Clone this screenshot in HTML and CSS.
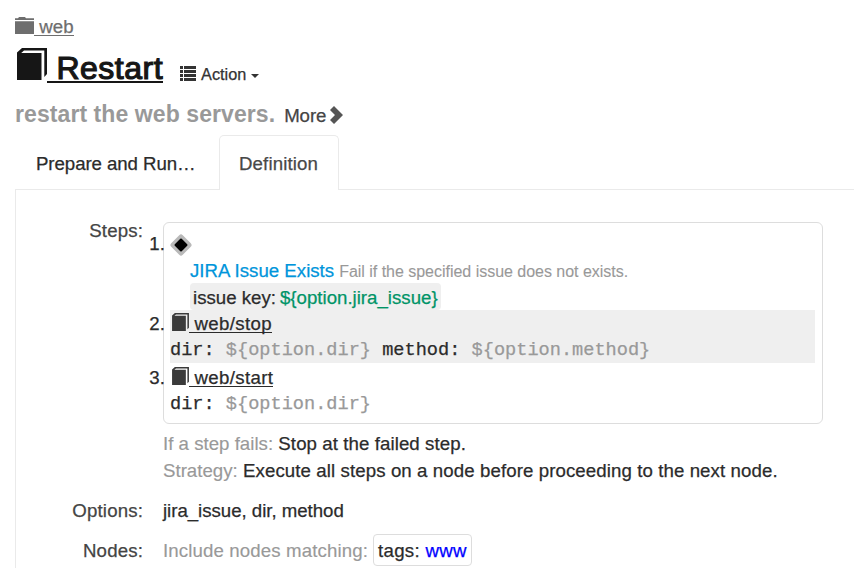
FILE: index.html
```
<!DOCTYPE html>
<html lang="en">
<head>
<meta charset="utf-8">
<title>Restart</title>
<link rel="stylesheet" href="styles.css">
</head>
<body>
<svg class="defs" width="0" height="0">
  <symbol id="book" viewBox="0 0 30 32">
    <path fill="currentColor" d="M0 4.5 5 0H30V26L27.3 29V2.6H7L4.2 5H24.5V32H0Z"/>
  </symbol>
</svg>
<header>
  <a class="group" href="#"><svg class="folder" width="19" height="17" viewBox="0 0 19 17"><path fill="currentColor" d="M0 1.2H3L4 0H10L11 1.2H19V3H0ZM0 4.2H19V17H0Z"/></svg><span class="u">&nbsp;web</span></a>
  <div class="title">
    <a class="job" href="#"><svg class="book-lg"><use href="#book"/></svg><span class="u">&nbsp;Restart</span></a>
    <span class="action"><svg width="16" height="15" viewBox="0 0 16 15"><path fill="currentColor" d="M0 0H3V3H0ZM0 4H3V7H0ZM0 8H3V11H0ZM0 12H3V15H0ZM4 0H16V3H4ZM4 4H16V7H4ZM4 8H16V11H4ZM4 12H16V15H4Z"/></svg><span class="action-text">Action</span><i class="caret"></i></span>
  </div>
  <div class="about"><strong>restart the web servers.</strong><span class="more">More</span><svg class="chev" width="13" height="18" viewBox="0 0 13 18"><path fill="currentColor" d="M4 0 13 9 4 18 0 14 5 9 0 4Z"/></svg></div>
</header>
<nav class="tabs"><a class="tab run">Prepare and Run…</a><a class="tab active">Definition</a></nav>
<main>
  <div class="row steps-row">
    <div class="label">Steps:</div>
    <div class="content">
      <div class="steps">
        <div class="step first">
          <div class="line"><span class="num">1.</span><svg class="diamond" width="22" height="22" viewBox="0 0 22 22"><path d="M11 3 19 11 11 19 3 11Z" fill="#b9b9b9" stroke="#b9b9b9" stroke-width="5" stroke-linejoin="round"/><path d="M11 5.5 16.5 11 11 16.5 5.5 11Z" stroke="#000" stroke-width="2" stroke-linejoin="round"/></svg></div>
          <div class="line indent"><span class="plugin">JIRA Issue Exists</span><span class="desc">Fail if the specified issue does not exists.</span></div>
          <div class="config"><span class="key">issue key:</span><span class="value">${option.jira_issue}</span></div>
        </div>
        <div class="step shaded">
          <div class="line"><span class="num">2.</span><svg class="book-sm"><use href="#book"/></svg><a class="u">&nbsp;web/stop</a></div>
          <div class="args">dir: <i>${option.dir}</i> method: <i>${option.method}</i></div>
        </div>
        <div class="step">
          <div class="line"><span class="num">3.</span><svg class="book-sm"><use href="#book"/></svg><a class="u">&nbsp;web/start</a></div>
          <div class="args">dir: <i>${option.dir}</i></div>
        </div>
      </div>
      <div class="line fails"><span class="muted">If a step fails:</span> Stop at the failed step.</div>
      <div class="line strategy"><span class="muted">Strategy:</span> Execute all steps on a node before proceeding to the next node.</div>
    </div>
  </div>
  <div class="row"><div class="label">Options:</div><div class="content options">jira_issue, dir, method</div></div>
  <div class="row"><div class="label">Nodes:</div><div class="content nodes"><span class="muted">Include nodes matching:</span><span class="tag">tags: <b>www</b></span></div></div>
</main>
</body>
</html>
```

FILE: styles.css
```
* { box-sizing: border-box; }
body {
  margin: 0;
  height: 568px;
  overflow: hidden;
  background: #fff;
  color: #2b2b2b;
  font: 18.67px/27px "Liberation Sans", Arial, sans-serif;
  letter-spacing: 0.05px;
  white-space: nowrap;
  -webkit-text-stroke: 0.25px currentColor;
}
svg { display: block; flex: none; }
.defs { position: absolute; }
a { color: inherit; text-decoration: none; }
.u { border-bottom: 1px solid currentColor; }
header { height: 135px; padding: 13px 0 0 15px; }
.group { display: flex; height: 27px; color: #6e6e6e; }
.group .u { height: 23px; }
.folder { margin-top: 4px; }
.title { display: flex; height: 57px; }
.job { display: flex; margin-left: 2px; color: #161616; }
.book-lg { width: 30px; height: 32px; margin-top: 8px; }
.job .u {
  height: 43px;
  border-width: 2px;
  font-size: 32px;
  line-height: 56px;
  letter-spacing: 0.5px;
  -webkit-text-stroke: 1.2px currentColor;
}
.action { display: flex; margin-left: 17px; color: #333; }
.action svg { margin-top: 26px; }
.action-text { margin: 21px 0 0 5px; font-size: 16.3px; letter-spacing: 0; }
.caret { margin: 34px 0 0 5px; height: 4px; border: 4px solid transparent; border-top-color: #333; border-bottom: 0; }
.about { display: flex; height: 38px; line-height: 34px; }
.about strong { color: #999; font-size: 23px; letter-spacing: 0.08px; -webkit-text-stroke: 0; }
.more { margin-left: 9px; padding-top: 2px; color: #444; letter-spacing: -0.1px; }
.chev { margin: 9px 0 0 4px; color: #555; }
.tabs { display: flex; height: 54px; margin-left: 15px; }
.tab { height: 55px; line-height: 57px; }
.run { width: 204px; padding-left: 21px; letter-spacing: -0.07px; }
.active {
  position: relative;
  width: 120px;
  padding-left: 19px;
  border: 1px solid #eaeaea;
  border-bottom: 0;
  border-radius: 5px 5px 0 0;
  background: #fff;
  color: #484848;
  line-height: 55px;
  letter-spacing: 0.13px;
}
main { height: 379px; margin-left: 15px; padding-top: 27px; border: solid #eaeaea; border-width: 1px 0 0 1px; }
.row { display: flex; height: 40px; }
.steps-row { height: 280px; }
.label { width: 127px; text-align: right; color: #444; letter-spacing: 0.15px; }
.content { width: 660px; margin-left: 20px; }
.steps { height: 202px; margin: 5px 0 6px; padding: 7px 7px 6px 6px; border: 1px solid #ddd; border-radius: 6px; }
.line { display: flex; height: 27px; }
.step { height: 54px; }
.first { height: 80px; }
.shaded { height: 53px; margin-bottom: 1px; background: #efefef; }
.num { width: 26px; margin-left: -26px; padding-right: 5px; text-align: right; flex: none; }
.diamond { margin-top: 4px; }
.indent { padding-left: 20px; }
.plugin { color: #0095db; letter-spacing: 0; }
.desc { margin-left: 5px; color: #999; font-size: 16px; letter-spacing: -0.02px; padding-top: 1px; -webkit-text-stroke-width: 0.1px; }
.config { display: flex; width: 251px; height: 27px; margin: -1px 0 0 20px; padding: 1px 3px 0; border-radius: 4px; background: #efefef; letter-spacing: 0; }
.value { margin-left: 4px; color: #009467; }
.book-sm { width: 17px; height: 18px; margin: 3px 0 0 2px; color: #3a3a3a; }
.step .line > .u { height: 23px; letter-spacing: 0.35px; }
.args { height: 26px; font: 18.63px/26px "Liberation Mono", monospace; letter-spacing: 0; }
.args i { color: #999; font-style: normal; }
.fails { display: block; letter-spacing: 0.08px; }
.strategy { display: block; letter-spacing: 0.09px; }
.options { letter-spacing: -0.03px; }
.muted { color: #999; -webkit-text-stroke-width: 0.15px; }
.fails .muted, .strategy .muted { letter-spacing: 0.01px; }
.nodes { display: flex; letter-spacing: 0.12px; }
.tag { height: 32px; margin: -3px 0 0 5px; padding: 2px 4px; border: 1px solid #ddd; border-radius: 4px; letter-spacing: 0.3px; }
.tag b { color: #00f; font-weight: normal; }
```
